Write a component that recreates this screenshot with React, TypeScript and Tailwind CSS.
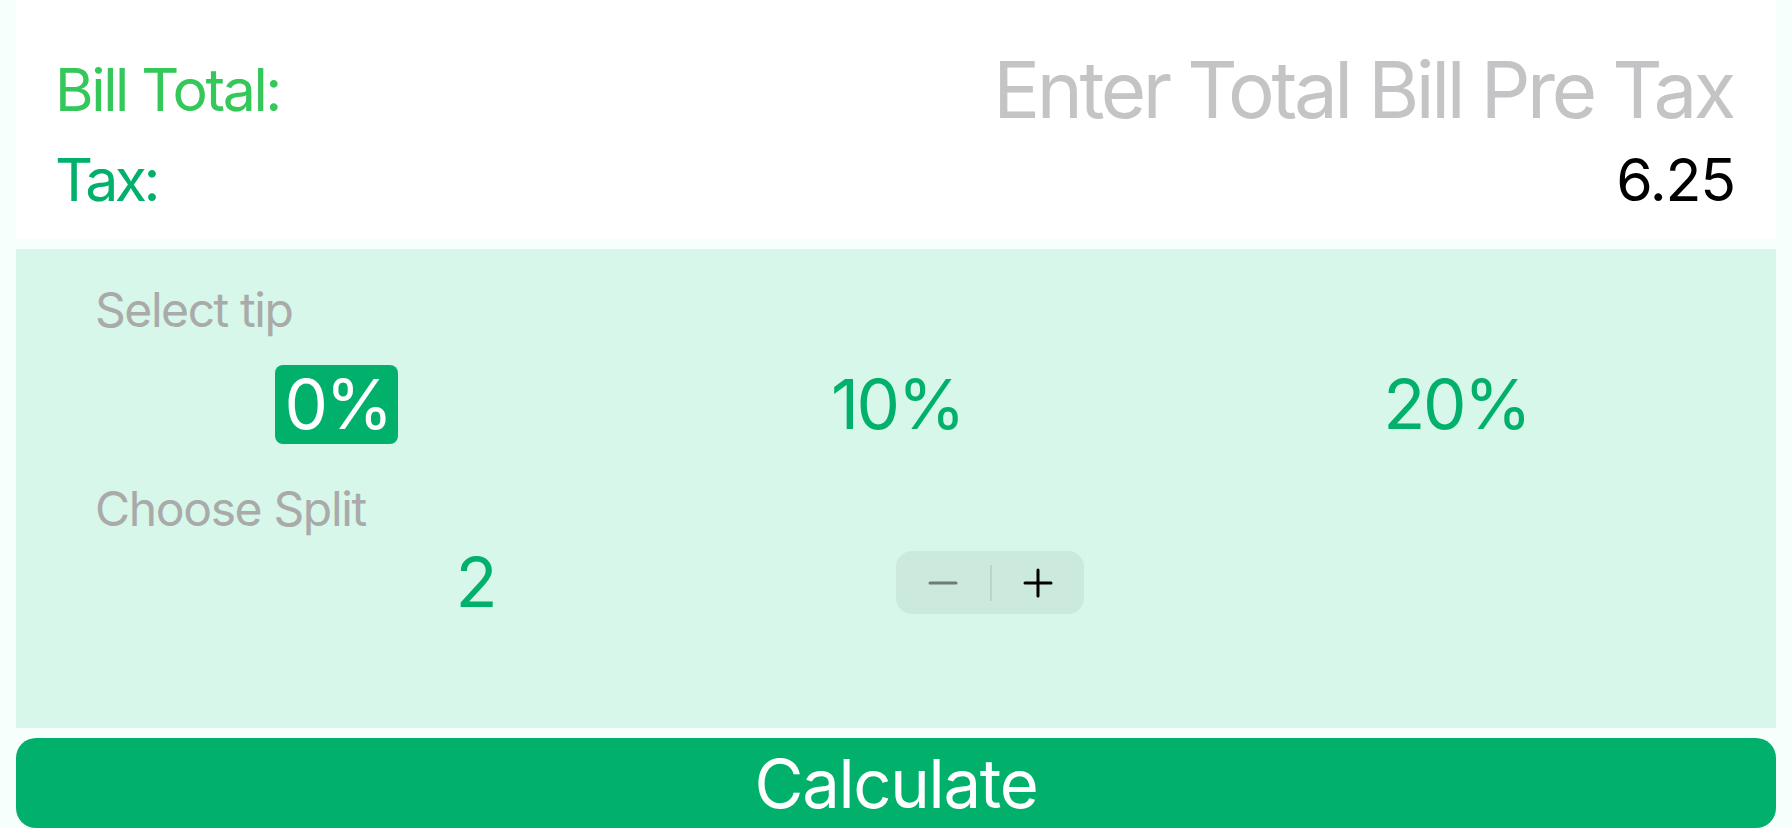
import React, { useState } from 'react';

const tips = [0, 10, 20];

const App: React.FC = () => {
  const [tip, setTip] = useState(0);
  const [split, setSplit] = useState(2);
  const [bill, setBill] = useState('');

  return (
    <div className="w-full h-[828px] overflow-hidden bg-[#f7fffc] px-4 flex flex-col font-[Inter,sans-serif]">
      {/* Bill / tax form */}
      <div className="h-[239px] bg-white pl-[39px] pr-[41px] pt-[44px]">
        <div className="h-[90px] flex items-center justify-between">
          <span className="text-[59px] leading-none tracking-[-0.04em] text-[#34c759]">Bill Total:</span>
          <input
            value={bill}
            onChange={(e) => setBill(e.target.value)}
            placeholder="Enter Total Bill Pre Tax"
            className="w-[900px] pr-[2px] text-right text-[78px] leading-none tracking-[-0.044em] bg-transparent outline-none text-black placeholder:text-[#c4c4c6]"
          />
        </div>
        <div className="h-[90px] flex items-center justify-between">
          <span className="text-[59px] leading-none tracking-[-0.06em] text-[#00b06b]">Tax:</span>
          <span className="text-[59px] leading-none tracking-[-0.02em] text-black">6.25</span>
        </div>
      </div>

      {/* Tip & split */}
      <div className="mt-[10px] h-[479px] bg-[#d6f7ea] px-[41px] pt-[37px] flex flex-col">
        <div className="pl-[38px] text-[48px] leading-none tracking-[-0.03em] text-[#a9aaa9]">Select tip</div>
        <div className="mt-[31px] grid grid-cols-3 h-[79px]">
          {tips.map((t) => (
            <div key={t} className="flex items-center justify-center">
              <button
                onClick={() => setTip(t)}
                className={
                  tip === t
                    ? 'h-[79px] pl-[9px] pr-[7px] rounded-[8px] bg-[#00b06b] text-white text-[69px] leading-none tracking-[-0.035em]'
                    : 'h-[79px] pl-[9px] pr-[7px] rounded-[8px] text-[#00b06b] text-[69px] leading-none tracking-[-0.035em]'
                }
              >
                {t}%
              </button>
            </div>
          ))}
        </div>
        <div className="mt-[41px] pl-[38px] text-[48px] leading-none tracking-[-0.028em] text-[#a9aaa9]">Choose Split</div>
        <div className="mt-[15px] grid grid-cols-2 h-[63px]">
          <div className="flex items-center justify-center text-[69px] leading-none text-[#00b06b]">{split}</div>
          <div className="flex items-center">
            <div className="w-[188px] h-[63px] rounded-[16px] bg-[#cbe9dd] flex items-center">
              <button
                onClick={() => setSplit((s) => Math.max(2, s - 1))}
                className="w-[94px] h-full flex items-center justify-center"
              >
                <svg width="30" height="6" viewBox="0 0 30 6">
                  <line x1="2" y1="3" x2="28" y2="3" stroke="#6d7d76" strokeWidth="3" strokeLinecap="round" />
                </svg>
              </button>
              <div className="w-[2px] h-[36px] bg-[#b8d6ca]" />
              <button
                onClick={() => setSplit((s) => s + 1)}
                className="w-[92px] h-full flex items-center justify-center"
              >
                <svg width="30" height="30" viewBox="0 0 30 30">
                  <line x1="2" y1="15" x2="28" y2="15" stroke="#000" strokeWidth="3" strokeLinecap="round" />
                  <line x1="15" y1="2" x2="15" y2="28" stroke="#000" strokeWidth="3" strokeLinecap="round" />
                </svg>
              </button>
            </div>
          </div>
        </div>
      </div>

      <button className="mt-[10px] h-[90px] shrink-0 rounded-[20px] bg-[#00b06b] text-white text-[67px] leading-none tracking-[-0.02em]">
        Calculate
      </button>
    </div>
  );
};

export default App;
